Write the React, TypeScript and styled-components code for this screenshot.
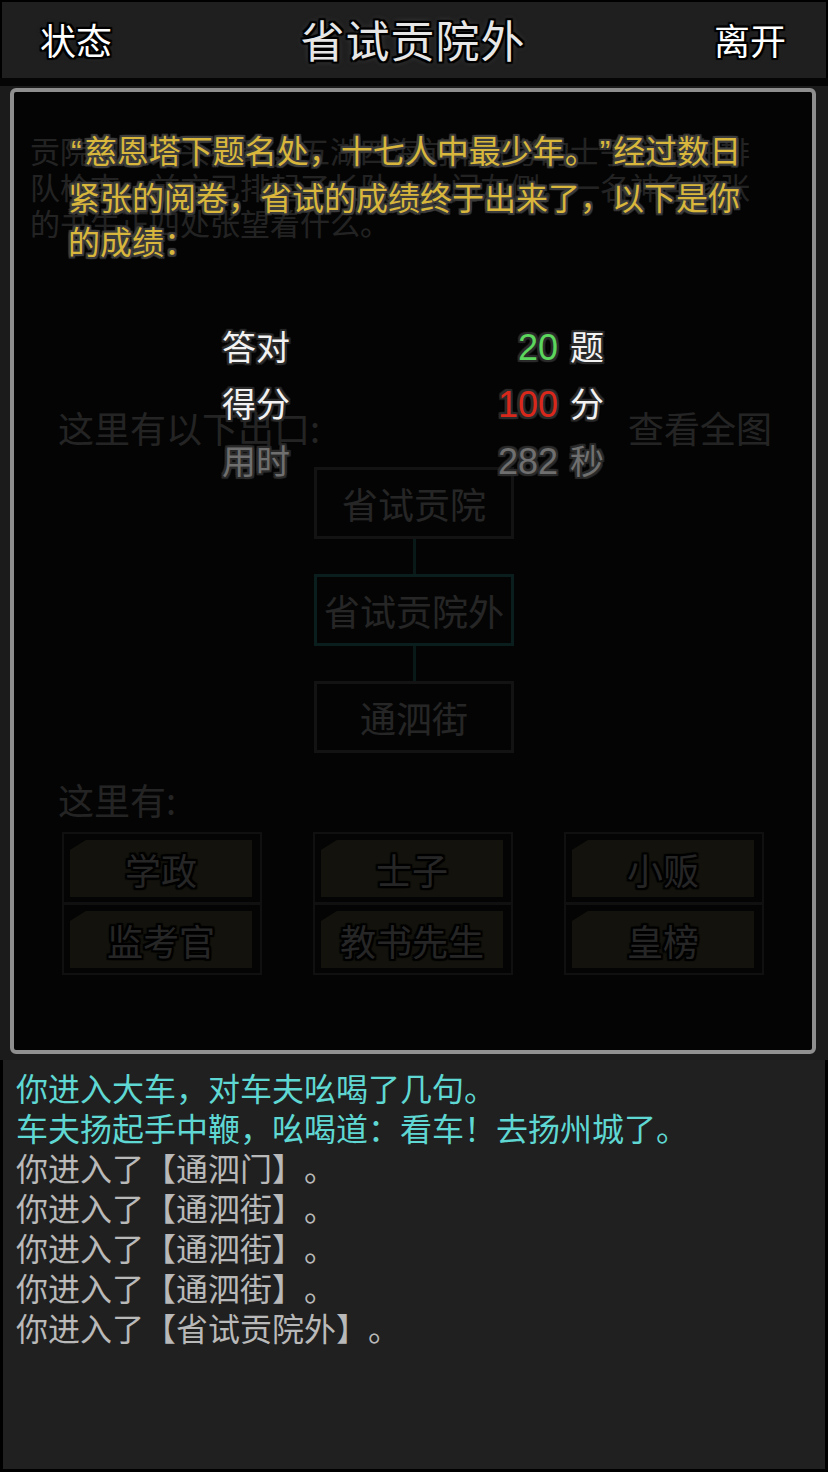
import styled, { createGlobalStyle } from "styled-components"

const CJK = `"Noto Sans CJK SC", "Noto Sans", sans-serif`
const LATIN = `"Liberation Sans", "Noto Sans CJK SC", sans-serif`

const outline = (c: string, w = 2) =>
  `${w}px 0 1px ${c}, -${w}px 0 1px ${c}, 0 ${w}px 1px ${c}, 0 -${w}px 1px ${c}, ` +
  `${w}px ${w}px 1px ${c}, -${w}px -${w}px 1px ${c}, ${w}px -${w}px 1px ${c}, -${w}px ${w}px 1px ${c}`

const GlobalStyle = createGlobalStyle`
  html, body {
    margin: 0;
    background: #000;
  }
  body {
    font-family: ${CJK};
    text-spacing-trim: space-all;
  }
`

const desc =
  "贡院门前人头攒动，五湖四海前来赶考的士子们都在排队检查，前方已排起了长队。大门左侧，一名神色紧张的书生正四处张望着什么。"

const npcs = [
  ["学政", "监考官"],
  ["士子", "教书先生"],
  ["小贩", "皇榜"],
]

const logLines = [
  { text: "你进入大车，对车夫吆喝了几句。", tone: "say" },
  { text: "车夫扬起手中鞭，吆喝道：看车！去扬州城了。", tone: "say" },
  { text: "你进入了【通泗门】。", tone: "plain" },
  { text: "你进入了【通泗街】。", tone: "plain" },
  { text: "你进入了【通泗街】。", tone: "plain" },
  { text: "你进入了【通泗街】。", tone: "plain" },
  { text: "你进入了【省试贡院外】。", tone: "plain" },
]

function App() {
  return (
    <>
      <GlobalStyle />
      <Screen>
        <TopBar>
          <BarButton>状态</BarButton>
          <Title>省试贡院外</Title>
          <BarButton $right>离开</BarButton>
        </TopBar>

        <Stage>
          <Room>
            <Description>{desc}</Description>
            <RoomRow>
              <RoomLabel>这里有以下出口:</RoomLabel>
              <RoomLabel>查看全图</RoomLabel>
            </RoomRow>
            <RoomMap>
              <MapNode>省试贡院</MapNode>
              <MapLink />
              <MapNode $current>省试贡院外</MapNode>
              <MapLink />
              <MapNode>通泗街</MapNode>
            </RoomMap>
            <RoomRow>
              <RoomLabel>这里有:</RoomLabel>
            </RoomRow>
            <NpcGrid>
              {npcs.map((col, i) => (
                <NpcColumn key={i}>
                  {col.map((name) => (
                    <NpcCell key={name}>
                      <NpcButton>{name}</NpcButton>
                    </NpcCell>
                  ))}
                </NpcColumn>
              ))}
            </NpcGrid>
          </Room>

          <ResultDialog>
            <Story>
              <Quote>“</Quote>慈恩塔下题名处，十七人中最少年。<Quote>”</Quote>
              经过数日紧张的阅卷，省试的成绩终于出来了，以下是你的成绩：
            </Story>
            <ScoreTable>
              <ScoreLabel>答对</ScoreLabel>
              <ScoreValue>
                <Num $tone="#5cd65c">20</Num>题
              </ScoreValue>
              <ScoreLabel>得分</ScoreLabel>
              <ScoreValue>
                <Num $tone="#d8281c">100</Num>分
              </ScoreValue>
              <ScoreLabel $dim>用时</ScoreLabel>
              <ScoreValue $dim>
                <Num $tone="#6f6f6f">282</Num>秒
              </ScoreValue>
            </ScoreTable>
          </ResultDialog>
        </Stage>

        <Log>
          {logLines.map((l, i) => (
            <LogLine key={i} $tone={l.tone}>
              {l.text}
            </LogLine>
          ))}
        </Log>
      </Screen>
    </>
  )
}

const Screen = styled.div`
  width: 828px;
  height: 1472px;
  display: flex;
  flex-direction: column;
  background: #000;
  overflow: hidden;
`

const TopBar = styled.header`
  flex: none;
  height: 78px;
  box-sizing: border-box;
  border: 2px solid #000;
  border-bottom: 0;
  background: #1f1f1f;
  display: grid;
  grid-template-columns: 1fr auto 1fr;
  align-items: center;
  padding: 0 40px 2px 38px;
`

const BarButton = styled.div<{ $right?: boolean }>`
  justify-self: ${({ $right }) => ($right ? "end" : "start")};
  font-size: 36px;
  line-height: 44px;
  color: #fff;
  text-shadow: ${outline("#000", 2)}, 0 0 5px #444;
`

const Title = styled.h1`
  margin: 0;
  font-size: 44px;
  font-weight: 400;
  line-height: 52px;
  letter-spacing: 1px;
  color: #e6e6e6;
  text-shadow: ${outline("#000", 2)}, 0 0 6px #666;
`

const Stage = styled.main`
  flex: none;
  height: 982px;
  position: relative;
  background: #1b1b1b;
  border-top: 8px solid #050505;
  box-sizing: border-box;
  overflow: hidden;
`

const Room = styled.section`
  padding: 46px 30px 0;
  display: flex;
  flex-direction: column;
`

const Description = styled.p`
  margin: 0;
  width: 740px;
  font-size: 30px;
  line-height: 36px;
  color: #c4c4c4;
`

const RoomRow = styled.div`
  display: flex;
  justify-content: space-between;
  padding: 0 26px 0 28px;
  margin-top: 167px;

  & ~ & {
    margin-top: 26px;
  }
`

const RoomLabel = styled.span`
  font-size: 36px;
  line-height: 40px;
  color: #c8c8c8;
`

const RoomMap = styled.div`
  display: flex;
  flex-direction: column;
  align-items: center;
  margin-top: 20px;
`

const MapNode = styled.div<{ $current?: boolean }>`
  width: 200px;
  height: 72px;
  box-sizing: border-box;
  border: 3px solid ${({ $current }) => ($current ? "#34a8a2" : "#686868")};
  display: flex;
  align-items: center;
  justify-content: center;
  font-size: 36px;
  color: #cfcfcf;
`

const MapLink = styled.div`
  width: 3px;
  height: 35px;
  background: #2f8a86;
`

const NpcGrid = styled.div`
  display: grid;
  grid-template-columns: repeat(3, 200px);
  column-gap: 51px;
  margin: 13px 0 0 32px;
`

const NpcColumn = styled.div`
  border: 2px solid #5a5a5a;
  display: flex;
  flex-direction: column;
`

const NpcCell = styled.div`
  padding: 6px 8px 5px 6px;

  & + & {
    border-top: 3px solid #5a5a5a;
  }
`

const NpcButton = styled.div`
  height: 57px;
  background: #6a6744;
  clip-path: polygon(16px 0, 100% 0, 100% 100%, 0 100%, 0 10px);
  display: flex;
  align-items: center;
  justify-content: center;
  font-size: 36px;
  color: #d0d0d0;
  text-shadow: ${outline("#000", 2)};
`

/* result popup drawn over the room view */
const ResultDialog = styled.div`
  position: absolute;
  top: 2px;
  left: 10px;
  right: 12px;
  bottom: 6px;
  border: 4px solid #8e8e8e;
  border-radius: 6px;
  background: rgba(0, 0, 0, 0.82);
  padding: 35px 64px 0 54px;
  box-sizing: border-box;
`

const Story = styled.p`
  margin: 0;
  width: 680px;
  font-size: 32px;
  line-height: 44px;
  color: #d8b73c;
  text-shadow: ${outline("#3d3d3d", 2)};
`

const Quote = styled.span`
  font-family: ${LATIN};
  padding: 0 3px;
`

const ScoreTable = styled.div`
  width: 382px;
  margin: 55px 0 0 154px;
  display: grid;
  grid-template-columns: 1fr auto;
  font-size: 34px;
  line-height: 57px;
`

const ScoreLabel = styled.span<{ $dim?: boolean }>`
  color: ${({ $dim }) => ($dim ? "#6f6f6f" : "#f2f2f2")};
  text-shadow: ${outline("#2c2c2c", 2)};
`

const ScoreValue = styled(ScoreLabel)`
  justify-self: end;
`

const Num = styled.span<{ $tone: string }>`
  font-family: ${LATIN};
  font-size: 36px;
  line-height: 1;
  margin-right: 12px;
  color: ${({ $tone }) => $tone};
`

const Log = styled.section`
  flex: 1;
  background: #202020;
  border: 3px solid #000;
  border-top: 0;
  padding: 7px 13px;
  font-size: 32px;
  line-height: 40px;
`

const LogLine = styled.div<{ $tone: string }>`
  color: ${({ $tone }) => ($tone === "say" ? "#5fd8d3" : "#b9b9b9")};
`

export default App
